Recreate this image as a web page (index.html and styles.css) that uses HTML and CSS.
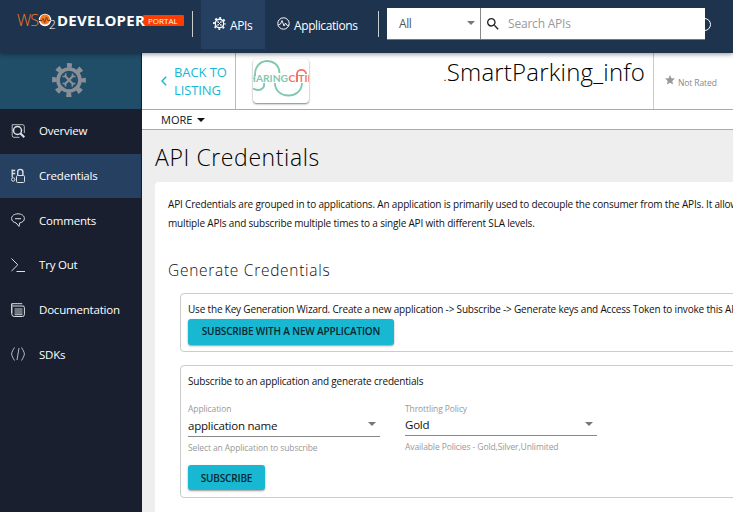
FILE: index.html
```html
<!DOCTYPE html>
<html lang="en">
<head>
<meta charset="utf-8">
<title>Developer Portal</title>
<link rel="stylesheet" href="styles.css">
</head>
<body>
<svg class="defs" width="0" height="0">
  <symbol id="gear" viewBox="0 0 34 34">
    <g fill="none" stroke="currentColor">
      <circle cx="17" cy="17" r="14.600" stroke-width="4.600" stroke-dasharray="5 6.467" stroke-dashoffset="2.500"/>
      <circle cx="17" cy="17" r="11" stroke-width="3.600"/>
      <path d="M12.500 12.500l9 9M21.500 12.500l-9 9" stroke-width="2.200"/>
      <path d="M10.500 13.500l3-.2.3-3M23.500 20.500l-3 .2-.3 3M20.500 10.500v3h3M10.500 20.500h3v3" stroke-width="1.600"/>
    </g>
  </symbol>
</svg>
<header class="topbar">
  <a class="brand">
    <span class="brand-ws">WS</span>
    <svg class="brand-o" viewBox="0 0 12 12"><circle cx="6" cy="6" r="6.200" fill="#fff"/><circle cx="6" cy="5.500" r="5" fill="#f47b20"/><path d="M0 6.500h3l1.200-2 1.500 4L7.500 3l1.200 3.500H12" fill="none" stroke="#713d20" stroke-width="1"/></svg>
    <span class="brand-2">2</span>
    <span class="brand-dev">DEVELOPER</span>
    <span class="brand-tag">PORTAL</span>
  </a>
  <i class="rule"></i>
  <nav class="tabs">
    <a class="tab active"><svg class="tab-icon"><use href="#gear"/></svg><span>APIs</span></a>
    <a class="tab"><svg class="tab-icon" viewBox="0 0 13 13" fill="none" stroke="currentColor"><circle cx="6.500" cy="6.500" r="5.700" stroke-width="1"/><path d="M1 8l2.500-1L5 3.500 7 9l1.500-3L10 8.500l2-.5" stroke-width=".9"/></svg><span>Applications</span></a>
  </nav>
  <i class="rule"></i>
  <div class="search">
    <div class="scope"><span>All</span><i class="caret"></i></div>
    <div class="query"><svg viewBox="0 0 24 24"><path fill="currentColor" d="M15.500 14h-.79l-.28-.27A6.470 6.470 0 0 0 16 9.500 6.500 6.500 0 1 0 9.500 16c1.610 0 3.090-.59 4.230-1.570l.27.28v.79l5 4.990L20.490 19l-4.990-5zm-6 0C7.010 14 5 11.990 5 9.500S7.010 5 9.500 5 14 7.010 14 9.500 11.990 14 9.500 14z"/></svg><span>Search APIs</span></div>
  </div>
  <i class="globe"></i>
</header>
<div class="shell">
  <aside class="sidebar">
    <div class="api-home"><svg><use href="#gear"/></svg></div>
    <a class="item"><svg viewBox="0 0 14 14"><path d="M13.300 9V2.500A1.800 1.800 0 0 0 11.500.7H1.200v10.800A1.800 1.800 0 0 0 3 13.300h5.500" opacity=".8"/><circle cx="6.500" cy="6.500" r="4" stroke-width="1.500"/><path d="M9.500 9.500l3.800 3.800" stroke-width="2"/></svg><span>Overview</span></a>
    <a class="item active"><svg viewBox="0 0 14 14"><path d="M1.200.5v8M1.200 1.500h3M1.200 4.500h3" stroke-width="1.300"/><circle cx="2.200" cy="10.500" r="1.700"/><rect x="5.500" y="6.500" width="8" height="7" rx="1"/><path d="M6.700 6V3a2.600 2.600 0 0 1 5.200 0v3" stroke-width="1.400"/></svg><span>Credentials</span></a>
    <a class="item"><svg viewBox="0 0 14 14"><path d="M7 .8c3.600 0 6.400 2 6.400 4.700 0 2.300-2 4-4.700 4.400L8 13.400 5 9.900C2.500 9.400.6 7.700.6 5.500.6 2.800 3.400.8 7 .8zM4 5.700h6"/></svg><span>Comments</span></a>
    <a class="item"><svg viewBox="0 0 14 14"><path d="M.5.500l6.300 6.300L.5 13M5.500 13.500h8.500"/></svg><span>Try Out</span></a>
    <a class="item"><svg viewBox="0 0 14 14"><path d="M.7 10V.7h10.500M.7 1.300l1 1.200M2 3h10a1.500 1.500 0 0 1 1.400 1.500v7a2 2 0 0 1-2 2H3.200a2.400 2.400 0 0 1-2.400-2.400V2.500"/><path d="M3.500 6h8M3.500 8h8M3.500 10h8M3.500 11.700h8" stroke-width=".9"/></svg><span>Documentation</span></a>
    <a class="item"><svg viewBox="0 0 14 14" opacity=".8"><path d="M3.500.5C2 3 .8 5 .6 7c.2 2 1.400 4 2.900 6.500M10.500.5C12 3 13.200 5 13.400 7c-.2 2-1.400 4-2.900 6.500M8 1L6 13"/></svg><span>SDKs</span></a>
  </aside>
  <main class="main">
    <section class="info">
      <a class="back"><svg viewBox="0 0 6 10"><path d="M5.200.8L1 5l4.200 4.200" fill="none" stroke="currentColor" stroke-width="1.400"/></svg><span>BACK TO<br>LISTING</span></a>
      <div class="thumb"><svg viewBox="0 0 56 43">
        <g fill="none" stroke="#82c8ae" stroke-width="1.900"><path d="M0 29.500c7 3.500 12 0 11-5.500M2 17C1-2.500 26-2.500 26.500 14M22 24c0 16.500 26.500 17 27 0"/></g>
        <path d="M44 23V15c0-5.500 9-5.500 9 0" fill="none" stroke="#f27469" stroke-width="1.900"/>
        <text x="-5" y="22.500" fill="#82c8ae" textLength="40" lengthAdjust="spacingAndGlyphs">HARING</text><text x="35.500" y="22.500" fill="#f27469" textLength="25" lengthAdjust="spacingAndGlyphs">CITIE</text>
      </svg></div>
      <h1><small>.</small>SmartParking_info</h1>
      <div class="rating"><svg viewBox="0 0 24 24"><path fill="currentColor" d="M12 17.270L18.180 21l-1.640-7.030L22 9.240l-7.190-.61L12 2 9.190 8.630 2 9.240l5.460 4.730L5.820 21z"/></svg><span>Not Rated</span></div>
    </section>
    <div class="more"><span>MORE</span><i class="caret"></i></div>
    <section class="content">
      <h2>API Credentials</h2>
      <div class="card">
        <p class="intro"><span>API Credentials are grouped in to applications. An application is primarily used to decouple the consumer from the APIs. It allow</span><br><span>multiple APIs and subscribe multiple times to a single API with different SLA levels.</span></p>
        <h3>Generate Credentials</h3>
        <div class="box wizard">
          <p>Use the Key Generation Wizard. Create a new application -&gt; Subscribe -&gt; Generate keys and Access Token to invoke this API</p>
          <button class="btn">SUBSCRIBE WITH A NEW APPLICATION</button>
        </div>
        <div class="box subscribe">
          <p>Subscribe to an application and generate credentials</p>
          <div class="fields">
            <div class="field"><label>Application</label><div class="select app"><span>application name</span><i class="caret"></i></div><small>Select an Application to subscribe</small></div>
            <div class="field"><label>Throttling Policy</label><div class="select"><span>Gold</span><i class="caret"></i></div><small>Available Policies - Gold,Silver,Unlimited</small></div>
          </div>
          <button class="btn short">SUBSCRIBE</button>
        </div>
      </div>
    </section>
  </main>
</div>
</body>
</html>
```
FILE: styles.css
```css
* { box-sizing: border-box; }
html, body { margin: 0; height: 512px; overflow: hidden; }
body { font-family: "Open Sans", "Noto Sans", sans-serif; color: #111; background: #eee; }
h1, h2, h3, p { margin: 0; font-weight: 400; }
span { white-space: nowrap; }
svg { display: block; flex: none; overflow: visible; }
.defs { position: absolute; }
.caret { flex: none; border: 4px solid transparent; border-top-color: currentColor; border-bottom: 0; }

.topbar { position: relative; z-index: 2; display: flex; height: 53px; background: #1e344e; color: #fff; box-shadow: 0 1px 5px rgba(0,0,0,.45); }
.brand { display: flex; align-items: center; width: 175px; height: 40px; margin-left: 17px; }
.brand-ws { font-size: 16px; font-weight: 300; color: #f47b20; width: 22px; letter-spacing: -1px; }
.brand-o { width: 12px; height: 12px; }
.brand-2 { font-size: 12px; font-weight: 300; width: 6px; margin: 9px 0 0 -2px; }
.brand-dev { font-size: 15px; font-weight: 700; width: 88px; letter-spacing: .25px; position: relative; z-index: 1; margin-left: 2px; }
.brand-tag { width: 41px; height: 11px; margin-left: -2px; background: #ff3d00; border-radius: 1px; font-size: 8px; line-height: 11px; padding-left: 5px; }
.rule { flex: none; width: 1px; height: 26px; margin-top: 11px; background: #c9cdd0; }
.tabs { display: flex; width: 177px; margin-left: 8px; }
.tab { display: flex; align-items: center; height: 49px; padding-left: 12px; font-size: 12px; letter-spacing: -.4px; }
.tab span { padding-top: 1px; }
.tab.active { width: 64px; background: #264061; }
.tab-icon { width: 13px; height: 13px; margin: -2px 4px 0 0; }
.search { display: flex; width: 318px; height: 32px; margin: 8px 0 0 8px; background: #fff; color: #555; border-bottom: 1px solid #777; font-size: 12px; letter-spacing: -.4px; }
.scope { display: flex; align-items: center; justify-content: space-between; width: 94px; padding: 0 5px 0 12px; border-right: 1px solid #888; }
.scope .caret { color: #777; margin-top: -2px; }
.query { display: flex; align-items: center; gap: 7px; padding-left: 4px; color: #999; }
.query span { letter-spacing: -.2px; }
.query svg { width: 16px; height: 16px; color: #222; }
.globe { width: 13px; height: 13px; margin: 18px 0 0 -7px; border: 1px solid #fff; border-radius: 50%; position: relative; z-index: -1; }

.shell { display: flex; height: 459px; }
.sidebar { flex: none; width: 142px; background: #1a1f2f; color: #fff; border-right: 1px solid #161d31; }
.api-home { display: flex; align-items: center; justify-content: center; height: 56px; padding: 0 3px 2px 0; background: #204d68; color: #8b9098; }
.api-home svg { width: 34px; height: 34px; }
.item { display: flex; align-items: center; height: 44.700px; padding: 0 0 1px 11px; gap: 14px; font-size: 11.500px; letter-spacing: -.2px; }
.item.active { background: #264061; }
.item svg { width: 14px; height: 14px; fill: none; stroke: #dde1e6; stroke-width: 1; }

.main { flex: 1; min-width: 0; overflow: hidden; }
.info { display: flex; height: 57px; background: #fff; border-bottom: 1px solid #aaa; }
.back { flex: none; display: flex; align-items: center; width: 94px; padding-left: 19px; gap: 7px; color: #18b7d2; font-size: 13px; line-height: 18px; letter-spacing: -.1px; border-right: 1px solid #bbb; }
.back svg { width: 6px; height: 10px; }
.thumb { flex: none; width: 56px; height: 44px; margin: 6px 1px 0 17px; border-radius: 4px; overflow: hidden; box-shadow: 0 1px 2px rgba(0,0,0,.5); }
.thumb text { font: 700 9.500px Lato, sans-serif; }
.thumb svg { width: 56px; height: 43px; }
.info h1 { flex: none; width: 343px; padding: 1px 8px 0 0; text-align: right; font-size: 24px; line-height: 36px; font-weight: 350; letter-spacing: .2px; color: #000; }
.info h1 small { font-size: 14px; }
.rating { flex: none; display: flex; align-items: center; gap: 2px; width: 90px; padding-left: 10px; color: #888; border-left: 1px solid #ccc; font-size: 8.500px; letter-spacing: -.1px; }
.rating svg { width: 12px; height: 12px; color: #999; margin-top: -2px; }
.rating span { padding-top: 3px; }
.more { display: flex; align-items: center; gap: 5px; height: 20px; padding-left: 19px; background: #fff; border-bottom: 1px solid #aaa; font-size: 11px; }
.content { padding: 9px 0 0 13px; }
h2 { height: 43px; font-size: 23px; line-height: 36px; letter-spacing: .6px; font-weight: 350; color: #000; }
.card { width: 650px; height: 360px; padding: 13px 0 0 13px; background: #fff; border-radius: 4px; }
.intro { height: 65px; font-size: 10px; line-height: 19px; letter-spacing: -.18px; }
h3 { height: 33px; font-size: 15.500px; line-height: 20px; letter-spacing: .72px; font-weight: 350; color: #111; }
.box { margin-left: 12px; padding: 6px 0 0 7px; border: 1px solid #ccc; border-radius: 4px; font-size: 10px; letter-spacing: -.18px; }
.box p { line-height: 18px; height: 19px; white-space: nowrap; }
.wizard { height: 59px; }
.subscribe { height: 133px; margin-top: 13px; }
.btn { display: block; width: 206px; height: 26px; padding: 0 0 2px; border: 0; border-radius: 3px; background: #18b7d2; color: #07282e; font: 600 10px "Open Sans", sans-serif; letter-spacing: -.15px; box-shadow: 0 1px 2px rgba(0,0,0,.4); }
.btn.short { width: 77px; height: 25px; padding-bottom: 0; }
.fields { display: flex; gap: 25px; height: 74px; padding-top: 12px; }
.field { width: 192px; }
.field label, .field small { display: block; font-size: 8.500px; line-height: 11px; letter-spacing: -.1px; color: #999; }
.select { display: flex; align-items: center; justify-content: space-between; height: 22px; padding-right: 4px; border-bottom: 1px solid #888; font-size: 11.500px; letter-spacing: -.22px; }
.select.app { height: 23px; }
.select .caret { color: #777; margin-top: -2px; }
.field small { margin-top: 5px; }
```
